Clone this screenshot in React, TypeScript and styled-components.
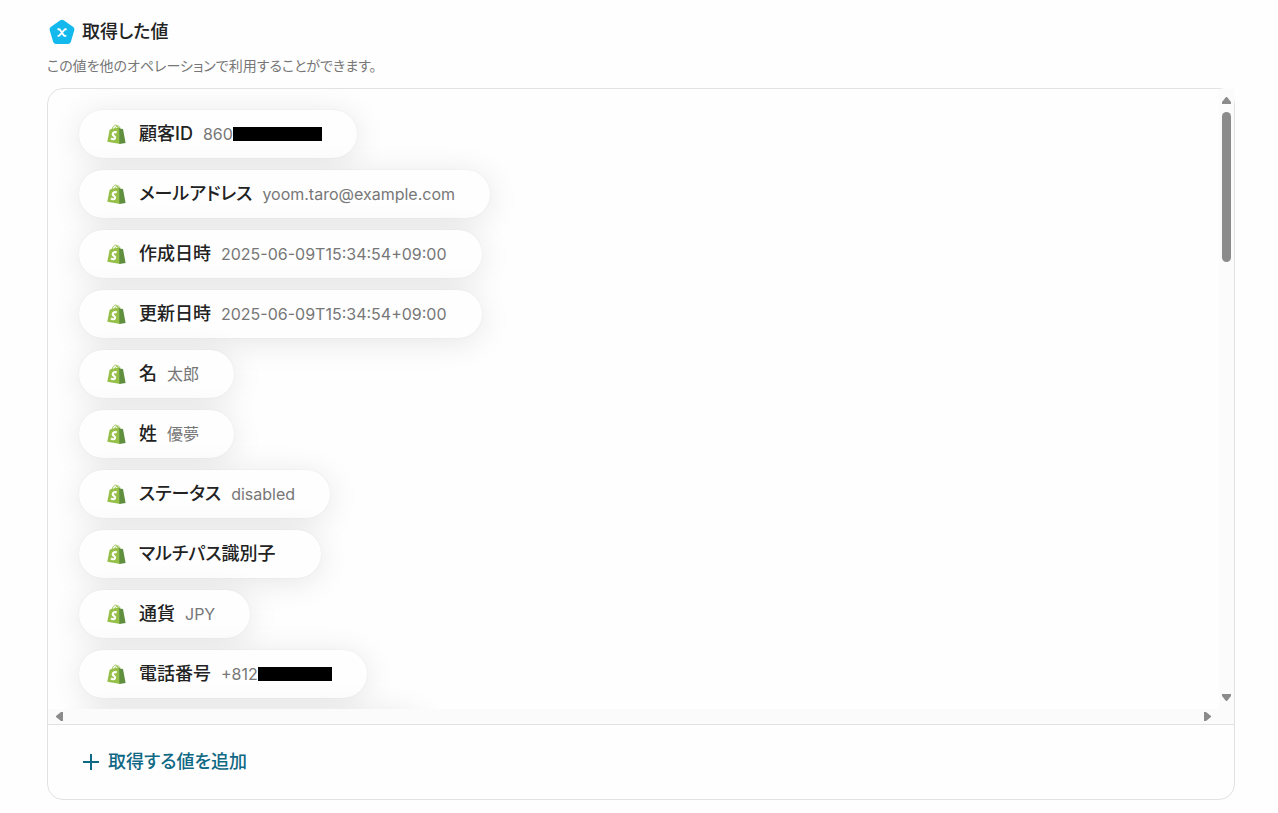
import React from "react";
import styled, { createGlobalStyle } from "styled-components";

const GlobalStyle = createGlobalStyle`
  *, *::before, *::after { box-sizing: border-box; }
  body {
    margin: 0;
    background: #fefefe;
    color: #222;
    font-family: Inter, "Noto Sans CJK JP", sans-serif;
    font-feature-settings: "palt";
  }
`;

const Page = styled.main`
  padding: 16px 43px 13px 47px;
`;

const Header = styled.header`
  display: flex;
  align-items: center;
  gap: 7px;
  height: 32px;
  padding-left: 2px;
`;

const Title = styled.h1`
  margin: 0;
  font-size: 18px;
  line-height: 32px;
  font-weight: 500;
`;

const Description = styled.p`
  margin: 8px 0 12px;
  font-size: 14px;
  line-height: 20px;
  color: #777;
`;

const Panel = styled.section`
  border: 1px solid #e2e2e2;
  border-radius: 16px;
  background: #fefefe;
`;

const ScrollArea = styled.div`
  display: grid;
  grid-template-columns: minmax(0, 1fr) 15px;
  grid-template-rows: 620px 15px;
  border-bottom: 1px solid #e2e2e2;
`;

const ValueList = styled.ul`
  display: flex;
  flex-direction: column;
  align-items: flex-start;
  gap: 12px;
  margin: 0;
  padding: 21px 31px;
  list-style: none;
  overflow: hidden;
  border-top-left-radius: 15px;
`;

const Pill = styled.li`
  display: flex;
  flex: none;
  align-items: center;
  height: 48px;
  padding: 0 35px 0 28px;
  border-radius: 24px;
  background: #fefefe;
  box-shadow: 0 4px 32px rgba(0, 0, 0, 0.1), 0 0 2px rgba(0, 0, 0, 0.06);
`;

const NextPill = styled(Pill)`
  width: 344px;
`;

const Label = styled.span`
  margin: 0 10px 0 13px;
  font-size: 18px;
  line-height: 24px;
  font-weight: 500;
`;

const Value = styled.span`
  display: flex;
  align-items: center;
  font-size: 16px;
  line-height: 24px;
  color: #777;
`;

const Redaction = styled.span<{ $width: number }>`
  width: ${(p) => p.$width}px;
  height: 14px;
  background: #000;
`;

const VerticalBar = styled.div`
  display: flex;
  flex-direction: column;
  align-items: center;
  justify-content: space-between;
  padding: 7px 0;
  background: #fbfbfb;
`;

const BarStart = styled.div`
  display: flex;
  flex-direction: column;
  align-items: center;
  gap: 7px;
`;

const Thumb = styled.div`
  width: 9px;
  height: 150px;
  border-radius: 5px;
  background: #8b8b8b;
`;

const HorizontalBar = styled.div`
  display: flex;
  align-items: center;
  justify-content: space-between;
  padding: 0 7px;
  background: #fbfbfb;
`;

const Corner = styled.div`
  background: #fbfbfb;
`;

const Footer = styled.footer`
  padding: 21px 35px;
`;

const AddButton = styled.button`
  display: flex;
  align-items: center;
  gap: 9px;
  padding: 0;
  border: 0;
  background: none;
  color: #0f6884;
  font: inherit;
  font-feature-settings: inherit;
  font-size: 18px;
  line-height: 32px;
  font-weight: 500;
  cursor: pointer;
`;

const OutputIcon = () => (
  <svg width="26" height="26" viewBox="0 0 26 26" aria-hidden="true">
    <path
      d="M11.3 1.3Q13 .1 14.7 1.3L24.3 8.1Q25.9 9.3 25.3 11.2L21.8 22.9Q21.1 25 19 25H7Q4.900 25 4.200 22.900L.7 11.200Q.1 9.300 1.700 8.100Z"
      fill="#13b9ec"
    />
    <path
      d="M8.500 10.200h1.400q.8 0 1.300.8l3.300 5q.5.9 1.300.9h1.500M17.600 10.200h-1q-.8 0-1.400.8l-4.300 5q-.7.9-1.500.9h-.8"
      fill="none"
      stroke="#fff"
      strokeWidth="1.900"
    />
  </svg>
);

const BagIcon = () => (
  <svg width="19" height="20" viewBox="0 0 19 20" aria-hidden="true">
    <path d="M2.700 5.500 12 3.200 13.300 20 .3 17.800Z" fill="#95bf47" />
    <path d="M12 3.500 13.700 4.800 16 5.100 18.600 18.900 12.400 20Z" fill="#5e8e3e" />
    <path
      d="M5 5.700C5.500 2.900 7.100 1.100 8.700 1.100 10.300 1.100 11 2.700 11 4.400M7.700 5.200C8.100 2.700 9.500 1.900 10.900 2 12.300 2.100 12.900 3.200 13 4.400"
      fill="none"
      stroke="#95bf47"
      strokeWidth=".9"
    />
    <path
      d="M9.700 8.500C8.300 7.800 5.900 8.200 5.700 10 5.500 11.700 8.400 11.900 8.100 13.700 7.900 15.600 5.600 15.700 4 14.400"
      fill="none"
      stroke="#fff"
      strokeWidth="2.200"
    />
  </svg>
);

const PlusIcon = () => (
  <svg width="16" height="16" viewBox="0 0 16 16" aria-hidden="true">
    <path d="M8 0v16M0 8h16" stroke="currentColor" strokeWidth="2" fill="none" />
  </svg>
);

const arrows = {
  up: "M4 1h1l4 5v2H0V6Z",
  down: "M0 1h9v2L5 8H4L0 3Z",
  left: "M8 0v9H6L1 5V4L6 0Z",
  right: "M1 0v9h2l5-4V4L3 0Z",
};

const Arrow = ({ direction }: { direction: keyof typeof arrows }) => (
  <svg width="9" height="9" viewBox="0 0 9 9" aria-hidden="true">
    <path d={arrows[direction]} fill="#8b8b8b" />
  </svg>
);

type Item = { label: string; value?: string; redacted?: number };

const items: Item[] = [
  { label: "顧客ID", value: "860", redacted: 89 },
  { label: "メールアドレス", value: "yoom.taro@example.com" },
  { label: "作成日時", value: "2025-06-09T15:34:54+09:00" },
  { label: "更新日時", value: "2025-06-09T15:34:54+09:00" },
  { label: "名", value: "太郎" },
  { label: "姓", value: "優夢" },
  { label: "ステータス", value: "disabled" },
  { label: "マルチパス識別子" },
  { label: "通貨", value: "JPY" },
  { label: "電話番号", value: "+812", redacted: 74 },
];

export default function App() {
  return (
    <>
      <GlobalStyle />
      <Page>
        <Header>
          <OutputIcon />
          <Title>取得した値</Title>
        </Header>
        <Description>この値を他のオペレーションで利用することができます。</Description>
        <Panel>
          <ScrollArea>
            <ValueList>
              {items.map((item) => (
                <Pill key={item.label}>
                  <BagIcon />
                  <Label>{item.label}</Label>
                  <Value>
                    {item.value}
                    {item.redacted && <Redaction $width={item.redacted} />}
                  </Value>
                </Pill>
              ))}
              <NextPill aria-hidden="true" />
            </ValueList>
            <VerticalBar>
              <BarStart>
                <Arrow direction="up" />
                <Thumb />
              </BarStart>
              <Arrow direction="down" />
            </VerticalBar>
            <HorizontalBar>
              <Arrow direction="left" />
              <Arrow direction="right" />
            </HorizontalBar>
            <Corner />
          </ScrollArea>
          <Footer>
            <AddButton type="button">
              <PlusIcon />
              取得する値を追加
            </AddButton>
          </Footer>
        </Panel>
      </Page>
    </>
  );
}
